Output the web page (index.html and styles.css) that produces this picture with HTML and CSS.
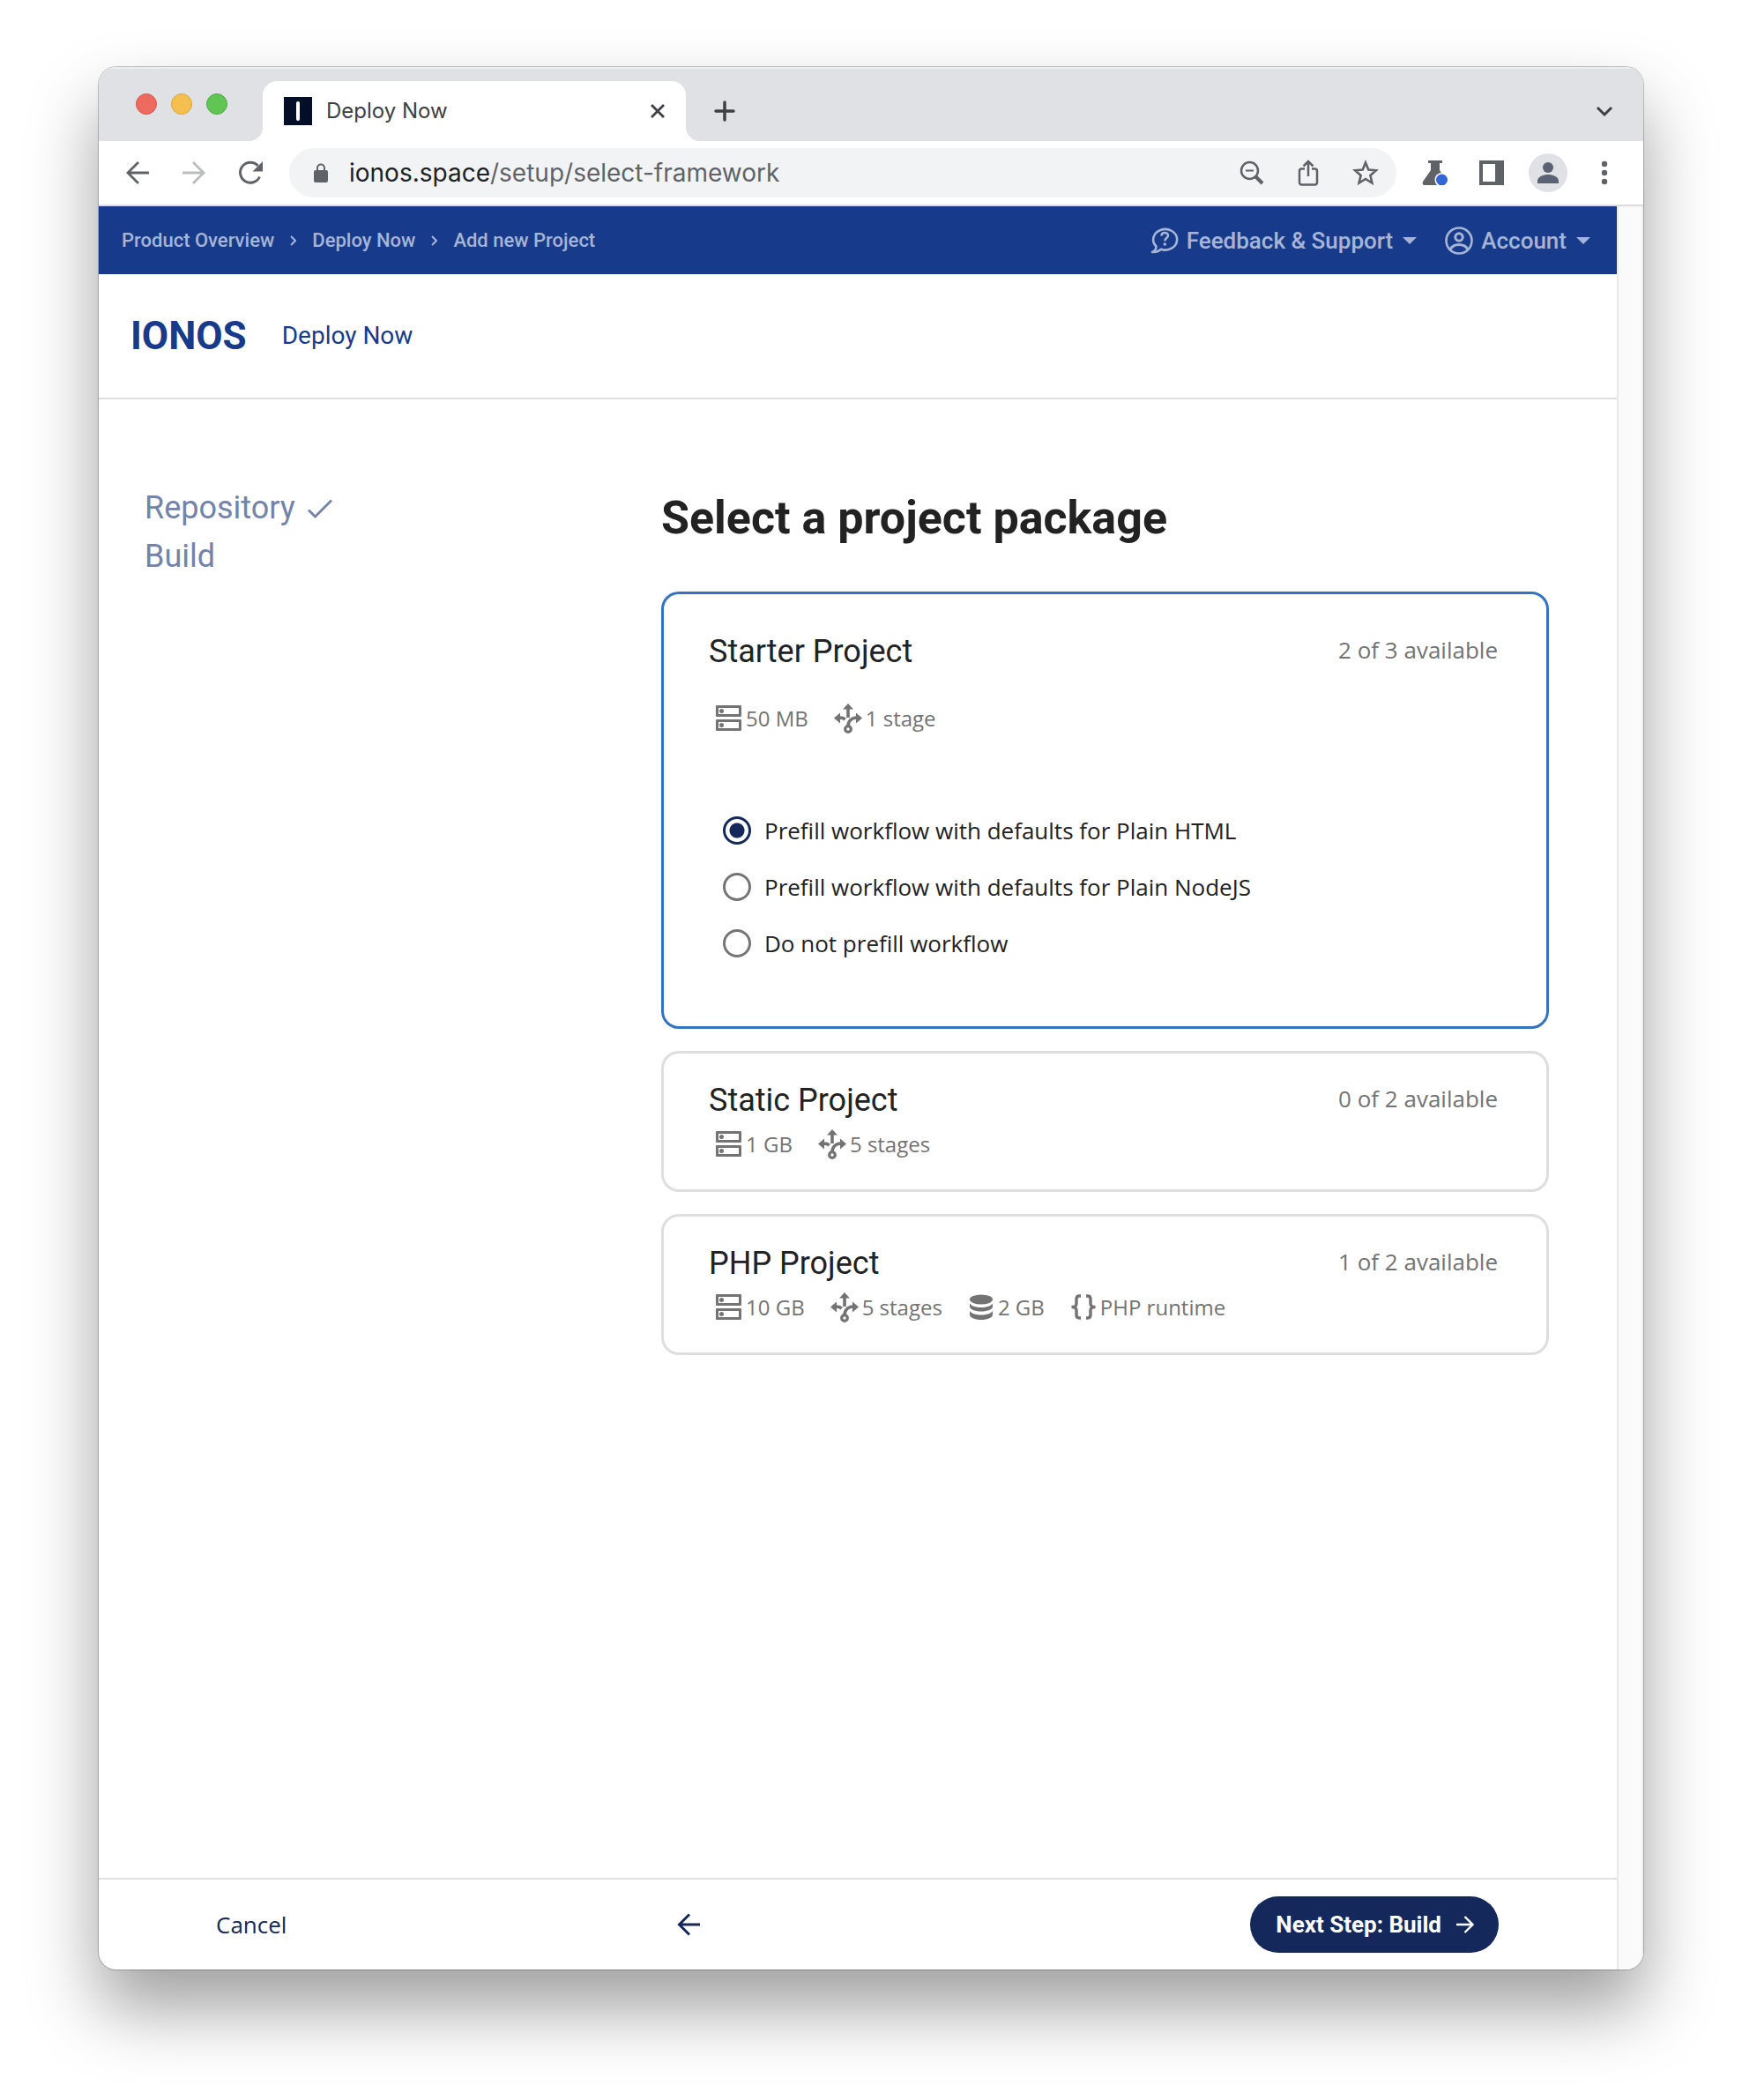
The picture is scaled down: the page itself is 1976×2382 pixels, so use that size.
FILE: index.html
```html
<!DOCTYPE html>
<html lang="en">
<head>
<meta charset="utf-8">
<meta name="viewport" content="width=device-width, initial-scale=1">
<title>Deploy Now</title>
<link rel="stylesheet" href="styles.css">
</head>
<body>
<svg class="sprite" aria-hidden="true">
  <symbol id="server" viewBox="0 0 30 30">
    <path d="M0 1a1 1 0 0 1 1-1h27a1 1 0 0 1 1 1v11a1 1 0 0 1-1 1H1a1 1 0 0 1-1-1zM3 3v7h23V3zM0 17a1 1 0 0 1 1-1h27a1 1 0 0 1 1 1v11a1 1 0 0 1-1 1H1a1 1 0 0 1-1-1zM3 19v7h23v-7z" fill="currentColor" fill-rule="evenodd"/>
    <circle cx="6.500" cy="6.500" r="2.500" fill="currentColor"/><circle cx="6.500" cy="22.500" r="2.500" fill="currentColor"/>
  </symbol>
  <symbol id="branch" viewBox="0 0 32 34">
    <path d="M16 0l6 6.500H10zM0 16.500l7-6v12zM32 16.500l-7-6v12z" fill="currentColor"/>
    <path d="M16 5v11M6 16c3 0 5 .5 6.800 2M26 16c-5.500 0-10 3.500-10 9.500" fill="none" stroke="currentColor" stroke-width="3.600"/>
    <circle cx="16" cy="29" r="3.300" fill="none" stroke="currentColor" stroke-width="3.200"/>
  </symbol>
  <symbol id="database" viewBox="0 0 30 30">
    <ellipse cx="15" cy="6" rx="13" ry="5.500" fill="currentColor"/>
    <path d="M2 10.500c2 3 7 4.500 13 4.500s11-1.500 13-4.500V14c0 3-5.500 5.500-13 5.500S2 17 2 14zM2 19c2 3 7 4.500 13 4.500S26 22 28 19v4c0 3.500-5.500 6-13 6S2 26.500 2 23z" fill="currentColor"/>
  </symbol>
  <symbol id="braces" viewBox="0 0 30 30">
    <path d="M12 2h-1.500C8 2 7 3 7 5.500v5c0 2.500-1 4-5.500 4 4.500 0 5.500 1.500 5.500 4v5C7 26 8 27 10.500 27H12M18 2h1.500C22 2 23 3 23 5.500v5c0 2.500 1 4 5.500 4-4.500 0-5.500 1.500-5.500 4v5c0 2.500-1 3.500-3.500 3.500H18" fill="none" stroke="currentColor" stroke-width="3.400"/>
  </symbol>
</svg>

<div class="window">
  <header class="tabstrip">
    <div class="lights"><i class="light red"></i><i class="light yellow"></i><i class="light green"></i></div>
    <div class="tab">
      <svg class="favicon" viewBox="0 0 32 32" aria-hidden="true"><rect width="32" height="32" fill="#030f28"/><rect x="14" y="5" width="4" height="22" rx="2" fill="#fff"/></svg>
      <span class="tab-title">Deploy Now</span>
      <button class="icon-button" type="button" aria-label="Close tab"><svg width="20" height="20" viewBox="0 0 20 20"><path d="M3 3l14 14M17 3L3 17" stroke="#3c4043" stroke-width="2.800"/></svg></button>
    </div>
    <button class="icon-button new-tab" type="button" aria-label="New tab"><svg width="24" height="24" viewBox="0 0 24 24"><path d="M12 2v20M2 12h20" stroke="#3c4043" stroke-width="3.500" stroke-linecap="round"/></svg></button>
    <button class="icon-button tab-menu" type="button" aria-label="Search tabs"><svg width="20" height="20" viewBox="0 0 20 20"><path d="M2 6l8 8 8-8" fill="none" stroke="#3c4043" stroke-width="3"/></svg></button>
  </header>

  <div class="toolbar">
    <div class="history">
      <button class="icon-button" type="button" aria-label="Back"><svg width="28" height="28" viewBox="0 0 28 28"><path d="M27 14H3M15 2L3 14l12 12" fill="none" stroke="#5f6368" stroke-width="2.800"/></svg></button>
      <button class="icon-button" type="button" aria-label="Forward"><svg width="28" height="28" viewBox="0 0 28 28"><path d="M1 14h24M13 2l12 12-12 12" fill="none" stroke="#babcbe" stroke-width="2.800"/></svg></button>
      <button class="icon-button" type="button" aria-label="Reload"><svg width="28" height="28" viewBox="0 0 28 28"><path d="M24.500 18.500A11.500 11.500 0 1 1 22.500 6" fill="none" stroke="#5f6368" stroke-width="3"/><path d="M28 1v11.500H16.500z" fill="#5f6368"/></svg></button>
    </div>
    <div class="address">
      <svg width="16" height="22" viewBox="0 0 16 22" aria-hidden="true"><rect y="8" width="16" height="14" rx="2" fill="#5f6368"/><path d="M4 9V5.500a4 4 0 0 1 8 0V9" fill="none" stroke="#5f6368" stroke-width="2"/></svg>
      <span class="url"><span class="host">ionos.space</span>/setup/select-framework</span>
      <button class="icon-button" type="button" aria-label="Zoom"><svg width="28" height="28" viewBox="0 0 28 28" fill="none" stroke="#5f6368"><circle cx="11.500" cy="11.500" r="9.500" stroke-width="2.500"/><path d="M18 18l8 8" stroke-width="4"/><path d="M7 11.500h9" stroke-width="2"/></svg></button>
      <button class="icon-button" type="button" aria-label="Share"><svg width="28" height="30" viewBox="0 0 28 30" fill="none" stroke="#5f6368" stroke-width="2.500"><path d="M10 10.500H6.500a2.500 2.500 0 0 0-2.500 2.500v13a2.500 2.500 0 0 0 2.500 2.500h15a2.500 2.500 0 0 0 2.500-2.500V13a2.500 2.500 0 0 0-2.500-2.500H18M14 19V3M8.500 7.500L14 2l5.500 5.500"/></svg></button>
      <button class="icon-button" type="button" aria-label="Bookmark"><svg width="30" height="30" viewBox="0 0 30 30"><path d="M15 3.500l3.300 8 8.700.7-6.600 5.700 2 8.600L15 22l-7.400 4.500 2-8.600L3 12.200l8.700-.7z" fill="none" stroke="#5f6368" stroke-width="2.600"/></svg></button>
    </div>
    <div class="extensions">
      <button class="icon-button" type="button" aria-label="Labs"><svg width="30" height="28" viewBox="0 0 30 28"><path d="M7 0h16v3h-3v8l8 13c1 2 0 4-2 4H3c-2 0-3-2-2-4l9-13V3H7z" fill="#5f6368"/><circle cx="22.500" cy="22" r="8" fill="#fff"/><circle cx="22.500" cy="22" r="6.500" fill="#3367d6"/></svg></button>
      <button class="icon-button" type="button" aria-label="Side panel"><svg width="28" height="28" viewBox="0 0 28 28"><path d="M0 0h28v28H0zM4 4v20h14V4z" fill="#5f6368" fill-rule="evenodd"/></svg></button>
      <button class="icon-button avatar" type="button" aria-label="Profile"><svg width="24" height="24" viewBox="0 0 24 24" fill="#5a6273"><circle cx="12" cy="6" r="6"/><path d="M0 24v-3c0-4.500 7-7 12-7s12 2.500 12 7v3z"/></svg></button>
      <button class="icon-button" type="button" aria-label="More"><svg width="8" height="28" viewBox="0 0 8 28" fill="#5f6368"><circle cx="4" cy="4" r="3.200"/><circle cx="4" cy="14" r="3.200"/><circle cx="4" cy="24" r="3.200"/></svg></button>
    </div>
  </div>

  <div class="viewport">
    <div class="page">
      <nav class="topnav">
        <div class="crumbs">
          <a href="#">Product Overview</a>
          <svg width="7" height="12" viewBox="0 0 7 12" aria-hidden="true"><path d="M1 1l5 5-5 5" fill="none" stroke="currentColor" stroke-width="2"/></svg>
          <a href="#">Deploy Now</a>
          <svg width="7" height="12" viewBox="0 0 7 12" aria-hidden="true"><path d="M1 1l5 5-5 5" fill="none" stroke="currentColor" stroke-width="2"/></svg>
          <a href="#">Add new Project</a>
        </div>
        <div class="menus">
          <button class="menu" type="button">
            <svg width="32" height="32" viewBox="0 0 32 32" aria-hidden="true"><path d="M6.500 22.500A13.500 11.800 0 1 1 12 25.800C9 28.500 6 29.300 2 29c2.500-1 4.500-3.500 4.500-6.500z" fill="none" stroke="currentColor" stroke-width="2.600" stroke-linejoin="round"/><path d="M12.500 10.500c0-4.500 7.500-4.500 7.500-.5 0 3-3.700 3-3.700 6.300" fill="none" stroke="currentColor" stroke-width="2.600"/><circle cx="16.300" cy="20" r="1.800" fill="currentColor"/></svg>
            <span>Feedback &amp; Support</span>
            <svg class="caret" width="16" height="8" viewBox="0 0 16 8" aria-hidden="true"><path d="M0 0h16L8 8z" fill="currentColor"/></svg>
          </button>
          <button class="menu" type="button">
            <svg width="32" height="32" viewBox="0 0 32 32" aria-hidden="true" fill="none" stroke="currentColor"><circle cx="16" cy="16" r="14.500" stroke-width="2.600"/><circle cx="16" cy="12" r="4.200" stroke-width="3"/><path d="M6 26c2-4 6-5.500 10-5.500S24 22 26 26" stroke-width="2.800"/></svg>
            <span>Account</span>
            <svg class="caret" width="16" height="8" viewBox="0 0 16 8" aria-hidden="true"><path d="M0 0h16L8 8z" fill="currentColor"/></svg>
          </button>
        </div>
      </nav>

      <header class="brandbar">
        <a class="logo" href="#">IONOS</a>
        <a class="product" href="#">Deploy Now</a>
      </header>

      <main class="content">
        <ol class="steps">
          <li>Repository <svg width="30" height="22" viewBox="0 0 30 22" aria-label="done"><path d="M2 12.500L9.500 20 28 1.500" fill="none" stroke="currentColor" stroke-width="2.800"/></svg></li>
          <li>Build</li>
        </ol>

        <section class="packages">
          <h1>Select a project package</h1>

          <article class="card selected">
            <div class="card-head"><h2>Starter Project</h2><span class="available">2 of 3 available</span></div>
            <ul class="specs">
              <li><svg class="spec-icon"><use href="#server"/></svg>50 MB</li>
              <li><svg class="spec-icon tall"><use href="#branch"/></svg>1 stage</li>
            </ul>
            <div class="options">
              <label><input type="radio" name="workflow" checked>Prefill workflow with defaults for Plain HTML</label>
              <label><input type="radio" name="workflow">Prefill workflow with defaults for Plain NodeJS</label>
              <label><input type="radio" name="workflow">Do not prefill workflow</label>
            </div>
          </article>

          <article class="card">
            <div class="card-head"><h2>Static Project</h2><span class="available">0 of 2 available</span></div>
            <ul class="specs">
              <li><svg class="spec-icon"><use href="#server"/></svg>1 GB</li>
              <li><svg class="spec-icon tall"><use href="#branch"/></svg>5 stages</li>
            </ul>
          </article>

          <article class="card">
            <div class="card-head"><h2>PHP Project</h2><span class="available">1 of 2 available</span></div>
            <ul class="specs">
              <li><svg class="spec-icon"><use href="#server"/></svg>10 GB</li>
              <li><svg class="spec-icon tall"><use href="#branch"/></svg>5 stages</li>
              <li><svg class="spec-icon"><use href="#database"/></svg>2 GB</li>
              <li><svg class="spec-icon"><use href="#braces"/></svg>PHP runtime</li>
            </ul>
          </article>
        </section>
      </main>

      <footer class="actions">
        <button class="cancel" type="button">Cancel</button>
        <button class="back" type="button" aria-label="Previous step"><svg width="26" height="26" viewBox="0 0 26 26"><path d="M26 13H3M14 1.500L2.500 13 14 24.500" fill="none" stroke="currentColor" stroke-width="3"/></svg></button>
        <button class="next" type="button">Next Step: Build <svg width="20" height="20" viewBox="0 0 20 20" aria-hidden="true"><path d="M0 10h18M9.500 1L18.500 10l-9 9" fill="none" stroke="currentColor" stroke-width="2.400"/></svg></button>
      </footer>
    </div>
    <div class="scrollbar"></div>
  </div>
</div>
</body>
</html>
```
FILE: styles.css
```css
* { box-sizing: border-box; }

body {
  margin: 0;
  min-height: 100vh;
  padding: 76px 112px 148px;
  display: flex;
  flex-direction: column;
  background: #fff;
  color: #222;
  font-family: "Open Sans", sans-serif;
}

h1, h2, ul, ol { margin: 0; padding: 0; font-weight: 400; list-style: none; }
a { color: inherit; text-decoration: none; }
button { margin: 0; padding: 0; border: 0; background: none; color: inherit; font: inherit; }
svg { display: block; flex: none; }
.sprite { position: absolute; width: 0; height: 0; }

.window {
  flex: 1;
  display: flex;
  flex-direction: column;
  overflow: hidden;
  border-radius: 20px;
  background: #fff;
  box-shadow: 0 0 0 1px rgba(0, 0, 0, .22), 0 44px 80px rgba(0, 0, 0, .38);
}

/* Browser chrome */
.icon-button { display: flex; align-items: center; justify-content: center; }

.tabstrip {
  display: flex;
  align-items: center;
  height: 84px;
  padding: 0 34px 0 42px;
  background: #dfe1e5;
  box-shadow: inset 0 2px 0 #edeef0;
}

.lights { display: flex; gap: 16px; margin-right: 40px; }
.light { width: 24px; height: 24px; border: 1px solid; border-radius: 50%; }
.red { background: #ed6a5e; border-color: #d6574b; }
.yellow { background: #f5bf4f; border-color: #dba53a; }
.green { background: #61c554; border-color: #4cac40; }

.tab {
  position: relative;
  align-self: flex-end;
  display: flex;
  align-items: center;
  gap: 16px;
  width: 480px;
  height: 68px;
  padding: 0 22px 0 24px;
  border-radius: 16px 16px 0 0;
  background: #fff;
}
.tab::before, .tab::after {
  content: "";
  position: absolute;
  bottom: 0;
  width: 16px;
  height: 16px;
}
.tab::before { left: -16px; background: radial-gradient(circle at 0 0, transparent 16px, #fff 16px); }
.tab::after { right: -16px; background: radial-gradient(circle at 100% 0, transparent 16px, #fff 16px); }
.favicon { width: 32px; height: 32px; }
.tab-title { flex: 1; color: #3c4043; font: 24px/32px Inter, sans-serif; }
.new-tab, .tab-menu { align-self: flex-end; height: 68px; }
.new-tab { margin-left: 32px; }
.tab-menu { margin-left: auto; }

.toolbar {
  display: flex;
  align-items: center;
  gap: 30px;
  height: 74px;
  padding: 0 22px 0 30px;
  border-bottom: 2px solid #d9dbdd;
}
.history { display: flex; gap: 36px; }
.address {
  flex: 1;
  display: flex;
  align-items: center;
  gap: 36px;
  height: 56px;
  padding: 0 20px 0 28px;
  border-radius: 28px;
  background: #f1f3f4;
}
.url { flex: 1; margin-left: -12px; color: #5f6368; font: 28px/36px Inter, sans-serif; }
.host { color: #202124; }
.extensions { display: flex; gap: 20px; margin-left: -8px; }
.extensions .icon-button { width: 44px; height: 44px; }
.extensions .avatar { border-radius: 50%; background: #dfe1e5; }

/* Page */
.viewport { flex: 1; display: grid; grid-template-columns: 1fr 30px; }
.page { display: flex; flex-direction: column; }
.scrollbar { border: solid #e8e8e8; border-width: 0 2px; border-right-color: #f2f2f2; background: #fafafa; }

.topnav {
  display: flex;
  align-items: center;
  justify-content: space-between;
  height: 77px;
  padding: 0 30px 0 26px;
  background: #173b8a;
  color: #a6b4d6;
  font-family: Roboto, sans-serif;
  font-weight: 500;
}
.crumbs { display: flex; align-items: center; gap: 18px; font-size: 22px; line-height: 32px; }
.menus { display: flex; gap: 32px; font-size: 26px; line-height: 32px; }
.menu { display: flex; align-items: center; gap: 9px; }
.caret { margin-left: 2px; }

.brandbar {
  display: flex;
  align-items: center;
  gap: 40px;
  height: 142px;
  padding: 0 36px;
  border-bottom: 2px solid #e0e0e0;
  color: #173b8a;
  font-family: Roboto, sans-serif;
}
.logo { font-size: 44px; line-height: 52px; font-weight: 700; }
.product { font-size: 28px; line-height: 36px; }

.content {
  flex: 1;
  display: grid;
  grid-template-columns: 586px 1fr;
  padding: 96px 77px 96px 52px;
}
.steps { color: #7483a9; font: 36px/55px Roboto, sans-serif; }
.steps li { display: flex; align-items: center; gap: 13px; }

.packages { display: flex; flex-direction: column; gap: 25px; }
.packages h1 { margin: 9px 0 28px; font: 700 52px/60px Roboto, sans-serif; }

.card { padding: 31px 55px 35px 51px; border: 3px solid #dedede; border-radius: 20px; }
.card-head { display: flex; align-items: flex-start; justify-content: space-between; }
.card h2 { font: 36px/44px Roboto, sans-serif; }
.available { color: #737373; font-size: 26px; line-height: 40px; }
.specs {
  display: flex;
  gap: 29px;
  margin-top: 12px;
  padding-left: 8px;
  color: #737373;
  font-size: 24px;
  line-height: 32px;
}
.specs li { display: flex; align-items: center; gap: 4px; }
.spec-icon { width: 30px; height: 30px; }
.spec-icon.tall { width: 32px; height: 34px; margin: -2px 0; }

.card.selected { padding-top: 43px; padding-bottom: 62px; border-color: #3572c0; }
.selected .specs { margin-top: 38px; }
.options { display: flex; flex-direction: column; align-items: flex-start; margin-top: 79px; padding-left: 16px; }
.options label { display: flex; align-items: center; gap: 15px; font-size: 26px; line-height: 64px; }
.options input {
  appearance: none;
  width: 32px;
  height: 32px;
  margin: 0;
  border: 3px solid #757575;
  border-radius: 50%;
}
.options input:checked {
  border-color: #14285c;
  background: radial-gradient(circle, #14285c 8px, transparent 9px);
}

.actions {
  display: grid;
  grid-template-columns: 505px 1fr auto;
  align-items: center;
  height: 104px;
  padding: 0 134px 0 133px;
  border-top: 2px solid #e0e0e0;
  color: #14285c;
}
.cancel { justify-self: start; font-size: 26px; line-height: 36px; }
.back { justify-self: start; padding-left: 18px; }
.next {
  display: flex;
  align-items: center;
  gap: 17px;
  height: 64px;
  padding: 0 28px 0 29px;
  border-radius: 32px;
  background: #14285c;
  color: #fff;
  font: 700 26px/32px Roboto, sans-serif;
}
```
